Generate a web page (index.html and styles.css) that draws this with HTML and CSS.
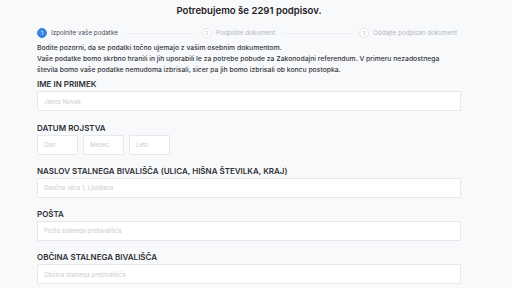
FILE: index.html
```html
<!DOCTYPE html>
<html lang="sl">
<head>
<meta charset="utf-8">
<link rel="stylesheet" href="styles.css">
</head>
<body>
<div class="page">
  <h1 class="title">Potrebujemo še 2291 podpisov.</h1>
  <div class="steps">
    <div class="step active"><span class="num">1</span><span class="stext">Izpolnite vaše podatke</span></div>
    <div class="line"></div>
    <div class="step"><span class="num">2</span><span class="stext">Podpišite dokument</span></div>
    <div class="line"></div>
    <div class="step"><span class="num">3</span><span class="stext">Oddajte podpisan dokument</span></div>
  </div>
  <p class="intro">Bodite pozorni, da se podatki točno ujemajo z vašim osebnim dokumentom.<br>Vaše podatke bomo skrbno hranili in jih uporabili le za potrebe pobude za Zakonodajni referendum. V primeru nezadostnega števila bomo vaše podatke nemudoma izbrisali, sicer pa jih bomo izbrisali ob koncu postopka.</p>
  <div class="field">
    <label class="label">IME IN PRIIMEK</label>
    <input class="input" placeholder="Janez Novak">
  </div>
  <div class="field">
    <label class="label">DATUM ROJSTVA</label>
    <div class="date">
      <input class="input small" placeholder="Dan">
      <input class="input small" placeholder="Mesec">
      <input class="input small" placeholder="Leto">
    </div>
  </div>
  <div class="field">
    <label class="label">NASLOV STALNEGA BIVALIŠČA (ULICA, HIŠNA ŠTEVILKA, KRAJ)</label>
    <input class="input" placeholder="Davčna ulica 1, Ljubljana">
  </div>
  <div class="field">
    <label class="label">POŠTA</label>
    <input class="input" placeholder="Pošta stalnega prebivališča">
  </div>
  <div class="field">
    <label class="label">OBČINA STALNEGA BIVALIŠČA</label>
    <input class="input" placeholder="Občina stalnega prebivališča">
  </div>
</div>
</body>
</html>
```
FILE: styles.css
```css
* { box-sizing: border-box; }
html, body { margin: 0; padding: 0; }
body {
  background: #f8f9fb;
  font-family: Inter, "Noto Sans", sans-serif;
  color: #2d2f33;
  overflow: hidden;
}
.page {
  width: 424px;
  margin-left: 37px;
  padding-top: 5px;
}
.title {
  margin: 0;
  font-size: 9.6px;
  line-height: 12px;
  font-weight: 600;
  text-align: center;
  color: #1f2125;
}
.steps {
  display: flex;
  align-items: center;
  margin-top: 10px;
  height: 12px;
  padding-right: 4px;
}
.step {
  display: flex;
  align-items: center;
  gap: 4px;
  font-size: 6.3px;
  color: #b4b7bd;
}
.step.active { color: #4a4d55; }
.num {
  width: 10px;
  height: 10px;
  border-radius: 50%;
  border: 1px solid #e4e6ea;
  display: flex;
  align-items: center;
  justify-content: center;
  font-size: 5px;
  color: #c3c6cc;
  background: #fff;
}
.step.active .num {
  background: #3b82e0;
  border-color: #3b82e0;
  color: #fff;
}
.line {
  flex: 1;
  height: 1px;
  background: #eceef1;
  margin: 0 7px;
}
.intro {
  margin: 4px 0 0;
  max-width: 416px;
  font-size: 6.8px;
  line-height: 10.8px;
  font-weight: 500;
  color: #34363b;
}
.field {
  margin-top: 4px;
  margin-bottom: 11.2px;
}
.label {
  display: block;
  font-size: 8px;
  line-height: 10px;
  font-weight: 600;
  color: #2f3136;
  margin-bottom: 2px;
}
.input {
  display: block;
  width: 100%;
  height: 20px;
  border: 1px solid #e6e8ec;
  border-radius: 1px;
  background: #fff;
  padding: 0 6px;
  font-family: inherit;
  font-size: 6px;
  color: #333;
  outline: none;
}
.input::placeholder { color: #c9ccd1; }
.date {
  display: flex;
  gap: 5px;
}
.input.small { width: 41px; }
```
